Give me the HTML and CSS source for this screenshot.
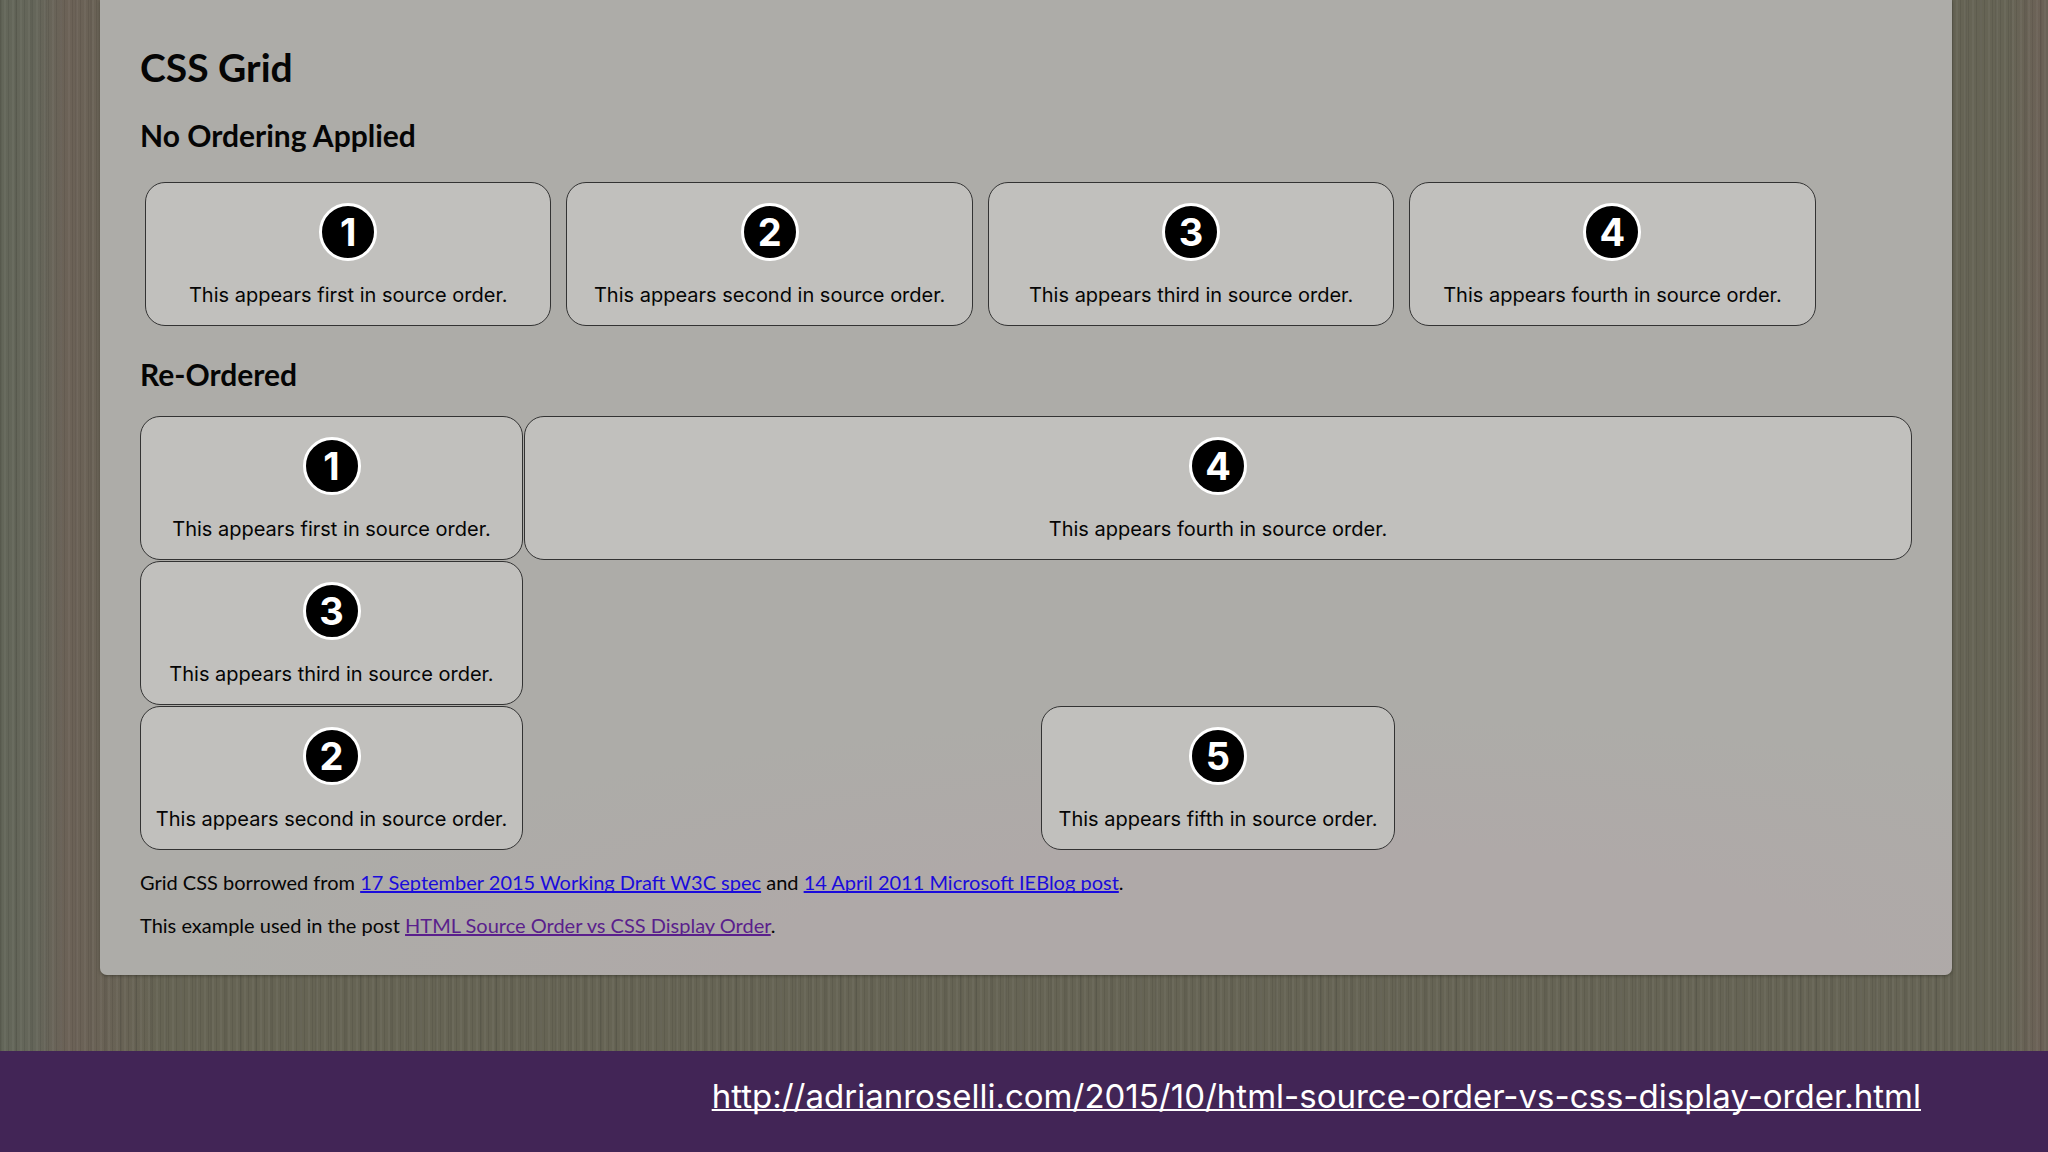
FILE: index.html
```html
<!DOCTYPE html>
<html lang="en">
<head>
<meta charset="utf-8">
<title>CSS Grid</title>
<link rel="stylesheet" href="styles.css">
</head>
<body>
<main class="panel">
  <h1 class="title">CSS Grid</h1>
  <h2 class="subtitle">No Ordering Applied</h2>
  <div class="plain-grid">
    <div class="card"><span class="badge">1</span><p class="note">This appears first in source order.</p></div>
    <div class="card"><span class="badge">2</span><p class="note">This appears second in source order.</p></div>
    <div class="card"><span class="badge">3</span><p class="note">This appears third in source order.</p></div>
    <div class="card"><span class="badge">4</span><p class="note">This appears fourth in source order.</p></div>
  </div>
  <h2 class="subtitle">Re-Ordered</h2>
  <div class="ordered-grid">
    <div class="card first"><span class="badge">1</span><p class="note">This appears first in source order.</p></div>
    <div class="card second"><span class="badge">2</span><p class="note">This appears second in source order.</p></div>
    <div class="card third"><span class="badge">3</span><p class="note">This appears third in source order.</p></div>
    <div class="card fourth"><span class="badge">4</span><p class="note">This appears fourth in source order.</p></div>
    <div class="card fifth"><span class="badge">5</span><p class="note">This appears fifth in source order.</p></div>
  </div>
  <p class="credit">Grid CSS borrowed from <a href="#spec">17 September 2015 Working Draft W3C spec</a> and <a href="#ieblog">14 April 2011 Microsoft IEBlog post</a>.</p>
  <p class="credit">This example used in the post <a class="seen" href="#post">HTML Source Order vs CSS Display Order</a>.</p>
</main>
<footer class="source">
  <a class="source-link" href="http://adrianroselli.com/2015/10/html-source-order-vs-css-display-order.html">http://adrianroselli.com/2015/10/html-source-order-vs-css-display-order.html</a>
</footer>
</body>
</html>
```
FILE: styles.css
```css
* {
  box-sizing: border-box;
}

body {
  margin: 0;
  min-height: 100vh;
  display: flex;
  flex-direction: column;
  color: #050505;
  font-family: Lato, sans-serif;
  background-color: #646253;
  background-image:
    repeating-linear-gradient(90deg, rgba(0, 0, 0, 0.08) 0 1px, transparent 1px 4px, rgba(255, 255, 255, 0.04) 4px 6px, transparent 6px 8px),
    repeating-linear-gradient(90deg, rgba(0, 0, 0, 0.05) 0 2px, transparent 2px 15px),
    linear-gradient(90deg, #636659 0, #65665a 36px, #6c6257 68px, #6a6256 90px, #666454 160px, #666455 calc(100% - 40px), #6c6257 calc(100% - 8px), #696257 100%);
}

.panel {
  margin: 0 96px 0 100px;
  padding: 40px 40px 38px;
  border-radius: 0 0 7px 7px;
  background: radial-gradient(ellipse 1100px 260px at 65% 100%, #afa9a8 0, #afa9a8 50%, #adaca8 100%);
  box-shadow: 0 1px 3px rgba(40, 40, 30, 0.5);
}

.title {
  margin: 0;
  font-size: 39px;
  line-height: 54px;
}

.subtitle {
  margin: 22px 0 28px;
  font-size: 30px;
  line-height: 38px;
}

.plain-grid {
  display: grid;
  grid-template-columns: repeat(4, 23%);
  gap: 15px;
  padding-left: 5px;
}

.plain-grid + .subtitle {
  margin: 29px 0 23px;
}

.ordered-grid {
  display: grid;
  grid-template-columns: 383px 1fr 354px 1fr;
  gap: 1px;
  margin-bottom: 20px;
}

.first { grid-area: 1 / 1; }
.second { grid-area: 3 / 1; }
.third { grid-area: 2 / 1; }
.fourth { grid-area: 1 / 2 / 2 / 5; }
.fifth { grid-area: 3 / 3; }

.card {
  display: flex;
  flex-direction: column;
  align-items: center;
  gap: 22px;
  padding: 20px 0 18px;
  border: 1px solid #333;
  border-radius: 20px;
  background: #c1c0bd;
  font-family: Inter, sans-serif;
}

.badge {
  width: 58px;
  height: 58px;
  border: 3px solid #fff;
  border-radius: 50%;
  background: #000;
  color: #fff;
  font-size: 38px;
  font-weight: 700;
  line-height: 52px;
  text-align: center;
}

.note {
  margin: 0;
  font-size: 20px;
  line-height: 24px;
  white-space: nowrap;
}

.credit {
  margin: 0 0 19px;
  font-size: 20px;
  line-height: 24px;
}

.credit:last-child {
  margin-bottom: 0;
}

.credit a {
  color: #1a0bdc;
  text-decoration-skip-ink: none;
}

.credit .seen {
  color: #5a1f8c;
}

.source {
  margin-top: auto;
  padding: 23px 127px 34px;
  background: #422556;
  text-align: right;
}

.source-link {
  color: #fff;
  font-family: Inter, sans-serif;
  font-size: 33px;
  line-height: 44px;
  text-decoration-thickness: 2px;
  text-decoration-skip-ink: none;
}
```
